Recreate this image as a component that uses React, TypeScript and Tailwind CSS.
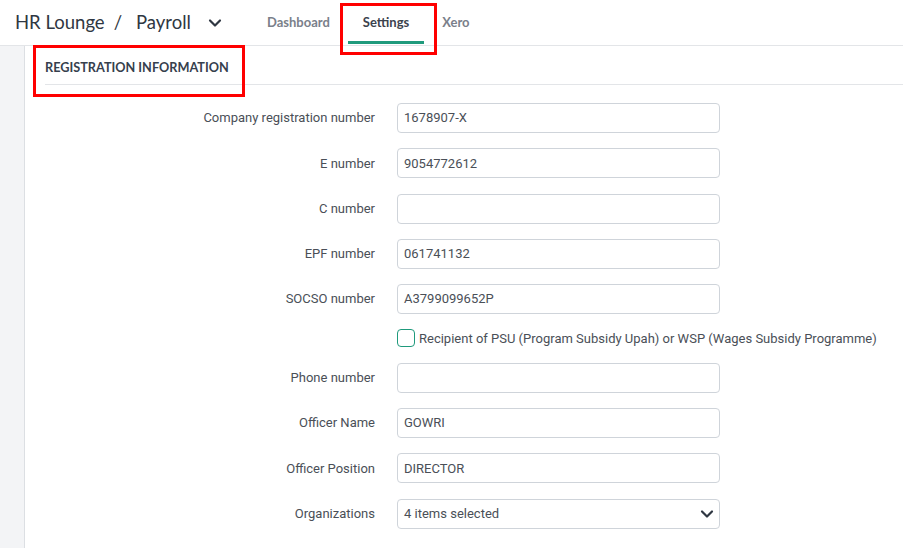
import { ReactNode } from 'react';

const fields: { label: string; value: string }[] = [
  { label: 'Company registration number', value: '1678907-X' },
  { label: 'E number', value: '9054772612' },
  { label: 'C number', value: '' },
  { label: 'EPF number', value: '061741132' },
  { label: 'SOCSO number', value: 'A3799099652P' },
];

const moreFields: { label: string; value: string }[] = [
  { label: 'Phone number', value: '' },
  { label: 'Officer Name', value: 'GOWRI' },
  { label: 'Officer Position', value: 'DIRECTOR' },
];

function Chevron({ className }: { className?: string }) {
  return (
    <svg viewBox="0 0 16 16" className={className} fill="none" stroke="currentColor" strokeWidth="2.2" strokeLinecap="round" strokeLinejoin="round">
      <path d="M3 5.5l5 5 5-5" />
    </svg>
  );
}

function Row({ label, children }: { label: string; children: ReactNode }) {
  return (
    <div className="flex items-center">
      <div className="w-[330px] text-right text-[13px] text-[#4a4f57]">{label}</div>
      <div className="ml-[22px] w-[323px]">{children}</div>
    </div>
  );
}

function TextBox({ value }: { value: string }) {
  return (
    <div className="h-[30px] rounded-[4px] border border-[#cfd4da] bg-white px-[6px] flex items-center text-[13px] text-[#4a4f57]">
      {value}
    </div>
  );
}

export default function App() {
  return (
    <div className="relative w-[903px] h-[548px] overflow-hidden bg-white flex flex-col" style={{ fontFamily: 'Roboto, "Liberation Sans", sans-serif' }}>
      {/* top bar */}
      <div className="h-[46px] border-b border-[#e3e5e8] flex items-center shrink-0" style={{ fontFamily: 'Lato, "Open Sans", sans-serif' }}>
        <div className="pl-[15px] flex items-center text-[#2f3742]">
          <span className="text-[18.5px]">HR Lounge</span>
          <span className="text-[18.5px] ml-[9px]">/</span>
          <span className="text-[18.5px] ml-[14px]">Payroll</span>
          <Chevron className="w-[16px] h-[16px] ml-[16px] text-[#2f3742]" />
        </div>
        <div className="ml-[29px] flex items-stretch h-full gap-[3px]">
          <div className="px-[15px] flex items-center text-[13px] font-bold text-[#7a808a]">Dashboard</div>
          <div className="relative px-[15px] flex items-center text-[13px] font-bold text-[#3b424d]">
            Settings
            <div className="absolute left-0 right-0 bottom-[1px] h-[3px] bg-[#1f9a7c]" />
          </div>
          <div className="px-[15px] flex items-center text-[13px] font-bold text-[#7a808a]">Xero</div>
        </div>
      </div>

      <div className="flex flex-1">
        <div className="w-[25px] bg-[#f3f4f6] border-r border-[#dcdfe3] shrink-0" />
        <div className="flex-1 pl-[20px]">
          <div className="h-[39px] border-b border-[#e3e5e8] flex items-center pt-[6px]">
            <span className="text-[12.7px] font-bold text-[#36404d]" style={{ fontFamily: 'Lato, "Open Sans", sans-serif' }}>
              REGISTRATION INFORMATION
            </span>
          </div>
          <div className="pt-[18px] flex flex-col gap-[15.3px]">
            {fields.map((f) => (
              <Row key={f.label} label={f.label}>
                <TextBox value={f.value} />
              </Row>
            ))}
            <div className="flex items-center h-[18px]">
              <div className="w-[330px]" />
              <div className="ml-[22px] flex items-center whitespace-nowrap">
                <div className="w-[18px] h-[18px] rounded-[4px] border border-[#1f9a7c] bg-white" />
                <span className="ml-[4px] text-[13px] text-[#4a4f57]">
                  Recipient of PSU (Program Subsidy Upah) or WSP (Wages Subsidy Programme)
                </span>
              </div>
            </div>
            {moreFields.map((f) => (
              <Row key={f.label} label={f.label}>
                <TextBox value={f.value} />
              </Row>
            ))}
            <Row label="Organizations">
              <div className="h-[30px] rounded-[4px] border border-[#cfd4da] bg-white pl-[6px] pr-[4px] flex items-center justify-between text-[13px] text-[#4a4f57]">
                <span>4 items selected</span>
                <Chevron className="w-[16px] h-[16px] text-[#2f3742]" />
              </div>
            </Row>
          </div>
        </div>
      </div>

      {/* annotation boxes */}
      <div className="absolute left-[340px] top-[3px] w-[97px] h-[52px] border-[3px] border-[#ff0000]" />
      <div className="absolute left-[33px] top-[45px] w-[212px] h-[52px] border-[3px] border-[#ff0000]" />
    </div>
  );
}
